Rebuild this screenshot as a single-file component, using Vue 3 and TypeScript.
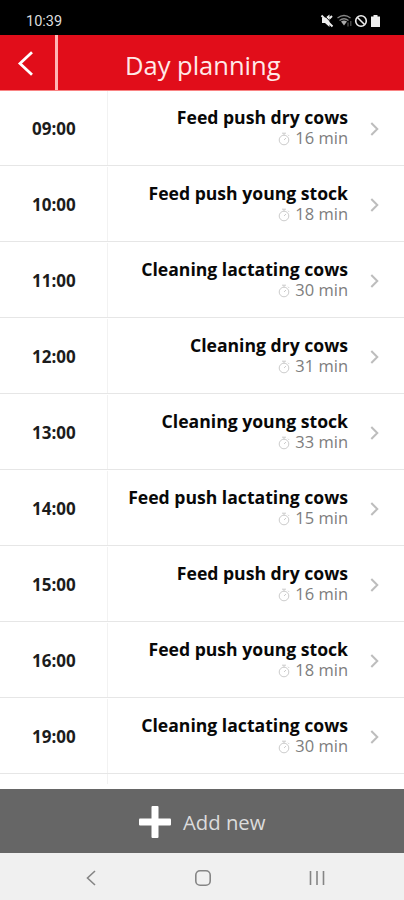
<script setup lang="ts">
interface Task {
  time: string
  name: string
  minutes: number
}

const tasks: Task[] = [
  { time: '09:00', name: 'Feed push dry cows', minutes: 16 },
  { time: '10:00', name: 'Feed push young stock', minutes: 18 },
  { time: '11:00', name: 'Cleaning lactating cows', minutes: 30 },
  { time: '12:00', name: 'Cleaning dry cows', minutes: 31 },
  { time: '13:00', name: 'Cleaning young stock', minutes: 33 },
  { time: '14:00', name: 'Feed push lactating cows', minutes: 15 },
  { time: '15:00', name: 'Feed push dry cows', minutes: 16 },
  { time: '16:00', name: 'Feed push young stock', minutes: 18 },
  { time: '19:00', name: 'Cleaning lactating cows', minutes: 30 },
]
</script>

<template>
  <div class="screen">
    <div class="status">
      <span class="clock">10:39</span>
      <svg class="status-icons" width="62" height="16" viewBox="0 0 62 16">
        <!-- muted speaker -->
        <path d="M2 5h3l4.500-3.500v12.500l-4.500-4h-3z" fill="#eee" />
        <path d="M3.500 1.500l10 10.500" stroke="#000" stroke-width="1" />
        <path d="M1.500 2.500l11 11M9.500 5.500l2.500-2.500" stroke="#eee" stroke-width="1.900" fill="none" />
        <!-- wifi -->
        <path d="M17.500 5q6.500-5 13 0M19.500 7.500q4.500-3.500 9 0" stroke="#858585" stroke-width="1.300" fill="none" />
        <path d="M21 8.500q3-2 6 0l-3 4z" fill="#aaa" />
        <path d="M28 9.500v4M30.800 8v5" stroke="#555" stroke-width="1.200" />
        <!-- blocked -->
        <circle cx="41" cy="8" r="5.300" stroke="#eee" stroke-width="1.600" fill="none" />
        <path d="M37.500 4.500l7 7" stroke="#eee" stroke-width="1.600" />
        <!-- battery -->
        <path d="M53.500 2h4v1.500h2.500v10.500h-9v-10.500h2.500z" fill="#eee" />
      </svg>
    </div>

    <header class="header">
      <button class="back" aria-label="Back">
        <svg width="16" height="26" viewBox="0 0 16 26">
          <path d="M15 2.300L3 13.500L15 24.700" fill="none" stroke="#fff" stroke-width="2.800" />
        </svg>
      </button>
      <h1 class="title"><span>Day planning</span></h1>
    </header>

    <main class="list">
      <div v-for="task in tasks" :key="task.time" class="row">
        <div class="time">{{ task.time }}</div>
        <div class="details">
          <div class="name">{{ task.name }}</div>
          <div class="duration">
            <svg class="timer" width="12" height="14" viewBox="0 0 12 14">
              <circle cx="6" cy="8" r="4.800" />
              <path d="M4 1.200h4M6 1.200v2M10 2.800l1 1M6 8l2-2" />
            </svg>
            <span>{{ task.minutes }} min</span>
          </div>
        </div>
        <svg class="chevron" width="9" height="14" viewBox="0 0 9 14">
          <path d="M1.300 1L7.300 7L1.300 13" />
        </svg>
      </div>
      <div class="rest"></div>
    </main>

    <button class="add">
      <svg width="32" height="32" viewBox="0 0 32 32">
        <rect x="12.500" y="0" width="7" height="32" rx="1" fill="#fff" />
        <rect x="0" y="12.500" width="32" height="7" rx="1" fill="#fff" />
      </svg>
      <span>Add new</span>
    </button>

    <nav class="nav">
      <svg width="10" height="16" viewBox="0 0 10 16">
        <path d="M9 1L1.500 8L9 15" />
      </svg>
      <svg width="16" height="16" viewBox="0 0 16 16">
        <rect x="0.800" y="0.800" width="14.400" height="14.400" rx="4.300" />
      </svg>
      <svg width="16" height="16" viewBox="0 0 16 16">
        <path d="M1.500 1v14M8 1v14M14.500 1v14" />
      </svg>
    </nav>
  </div>
</template>

<style>
body {
  margin: 0;
}
</style>

<style scoped>
.screen {
  width: 404px;
  height: 900px;
  display: flex;
  flex-direction: column;
  overflow: hidden;
  background: #fff;
  font-family: 'Open Sans', 'Noto Sans', sans-serif;
}

svg {
  display: block;
  flex: none;
}

button {
  border: 0;
  padding: 0;
  font: inherit;
}

.status {
  height: 35px;
  flex: none;
  box-sizing: border-box;
  display: flex;
  justify-content: space-between;
  padding: 13px 22px 0 26px;
  background: #000;
}

.clock {
  color: #ddd;
  font: 400 14.500px/17px Roboto, sans-serif;
}

.header {
  height: 56px;
  flex: none;
  box-sizing: border-box;
  display: flex;
  background: #e10d1a;
  border-bottom: 1px solid #f98484;
}

.back {
  width: 58px;
  box-sizing: border-box;
  border-right: 3px solid #ffb5b5;
  padding: 1px 0 0 17px;
  background: none;
  display: flex;
  align-items: center;
}

.title {
  flex: 1;
  margin: 0;
  padding: 13px 0 0 67px;
  color: #ffe9e8;
  font-size: 25.500px;
  font-weight: 400;
  line-height: 34px;
}

.list {
  flex: 1;
  min-height: 0;
  overflow: hidden;
}

.row {
  height: 76px;
  box-sizing: border-box;
  display: flex;
  align-items: center;
  padding-top: 1px;
  border-bottom: 1px solid #e6e6e6;
}

.row:first-child {
  height: 75px;
  padding-top: 0;
}

.time {
  width: 108px;
  align-self: stretch;
  box-sizing: border-box;
  display: flex;
  align-items: center;
  padding: 1px 0 0 32px;
  border-right: 1px solid #f2f2f2;
  color: #1c1c1c;
  font-size: 17px;
  font-weight: 700;
}

.details {
  flex: 1;
  display: flex;
  flex-direction: column;
  align-items: flex-end;
}

.name {
  color: #080808;
  font-size: 17.600px;
  font-weight: 700;
  line-height: 18px;
  padding-bottom: 2px;
  white-space: nowrap;
}

.duration {
  display: flex;
  align-items: center;
  gap: 5px;
  color: #7d7d7d;
  font-size: 16.500px;
  line-height: 20px;
}

.timer {
  margin-top: 2px;
  fill: none;
  stroke: #ccc;
  stroke-width: 1;
}

.chevron {
  margin: 2px 25px 0 22px;
  fill: none;
  stroke: #bdbdbd;
  stroke-width: 2;
}

.rest {
  width: 107px;
  height: 10px;
  border-right: 1px solid #f2f2f2;
}

.add {
  height: 64px;
  flex: none;
  display: flex;
  align-items: center;
  gap: 12px;
  padding: 1px 0 0 139px;
  box-sizing: border-box;
  background: #666;
  color: #dcdcdc;
  font-size: 20.300px;
}

.nav {
  height: 47px;
  flex: none;
  box-sizing: border-box;
  display: flex;
  align-items: center;
  padding: 3px 79px 0 86px;
  justify-content: space-between;
  background: #f0f0f0;
}

.nav svg {
  fill: none;
  stroke: #858585;
  stroke-width: 1.600;
}
</style>
